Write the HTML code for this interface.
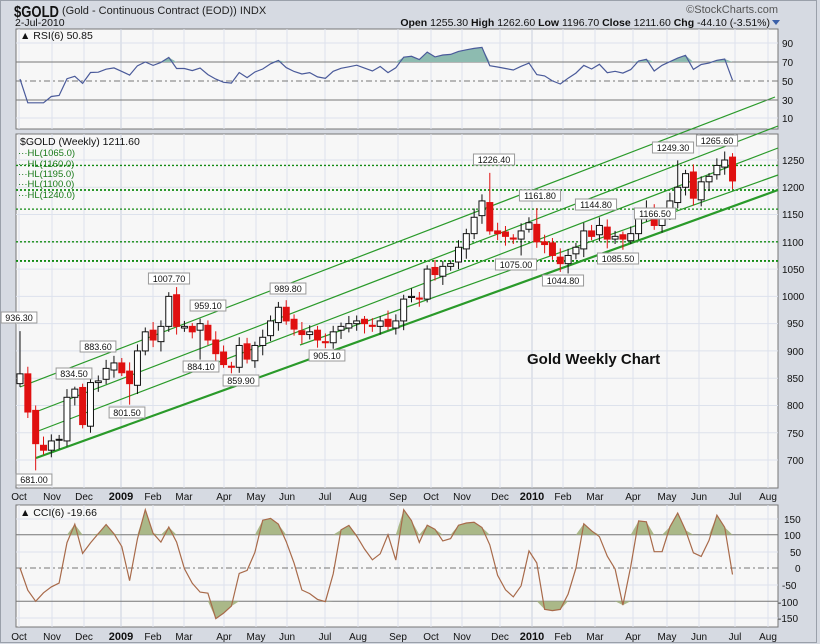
<!DOCTYPE html>
<html><head><meta charset="utf-8"><style>
body{margin:0;width:820px;height:644px;overflow:hidden;background:#d6dae2;font-family:"Liberation Sans",sans-serif}
svg{display:block}
</style></head><body>
<svg id="s" width="820" height="644" xmlns="http://www.w3.org/2000/svg" font-family="Liberation Sans, sans-serif">
<rect x="0.5" y="0.5" width="816" height="642" fill="#d6dae2" stroke="#9aa0aa"/>
<text x="14" y="17" font-size="16" font-weight="bold" fill="#111" textLength="45" lengthAdjust="spacingAndGlyphs">$GOLD</text>
<text x="62" y="14" font-size="11" fill="#222">(Gold - Continuous Contract (EOD))  INDX</text>
<text x="15" y="26" font-size="10.5" fill="#111">2-Jul-2010</text>
<text x="778" y="13" font-size="11" fill="#555" text-anchor="end">©StockCharts.com</text>
<text x="770" y="26" font-size="10.5" fill="#111" text-anchor="end"><tspan font-weight="bold">Open</tspan> 1255.30 <tspan font-weight="bold">High</tspan> 1262.60 <tspan font-weight="bold">Low</tspan> 1196.70 <tspan font-weight="bold">Close</tspan> 1211.60 <tspan font-weight="bold">Chg</tspan> -44.10 (-3.51%)</text>
<path d="M772,20 l8,0 l-4,5z" fill="#3a5fa8"/>
<rect x="16" y="29" width="762" height="100" fill="#f7f7f7" stroke="#777"/>
<rect x="16" y="134" width="762" height="354" fill="#f7f7f7" stroke="#777"/>
<rect x="16" y="505" width="762" height="122" fill="#f7f7f7" stroke="#777"/>
<g id="grid" stroke="#dde2ec" stroke-width="1"></g>
<g id="ds"></g>
<text x="20" y="39" font-size="10.5" fill="#111">▲ RSI(6) 50.85</text>
<g font-size="10" fill="#111">
<text x="782" y="47">90</text><text x="782" y="66">70</text><text x="782" y="85">50</text><text x="782" y="104">30</text><text x="782" y="122">10</text>
<text x="782" y="164">1250</text><text x="782" y="191">1200</text><text x="782" y="218">1150</text><text x="782" y="246">1100</text><text x="782" y="273">1050</text><text x="782" y="300">1000</text><text x="787" y="327">950</text><text x="787" y="355">900</text><text x="787" y="382">850</text><text x="787" y="409">800</text><text x="787" y="437">750</text><text x="787" y="464">700</text>
<text x="784" y="523">150</text><text x="784" y="539">100</text><text x="790" y="556">50</text><text x="795" y="572">0</text><text x="782" y="589">-50</text><text x="778" y="606">-100</text><text x="778" y="622">-150</text>
</g>
<text x="20" y="145" font-size="10.5" fill="#111">$GOLD (Weekly) 1211.60</text>
<g font-size="9.5" fill="#1a7a1a">
<text x="18" y="156">···HL(1065.0)</text><text x="18" y="167">···HL(1160.0)</text><text x="18" y="177">···HL(1195.0)</text><text x="18" y="187">···HL(1100.0)</text><text x="18" y="198">···HL(1240.0)</text>
</g>
<text x="20" y="516" font-size="10.5" fill="#111">▲ CCI(6) -19.66</text>
<text x="527" y="364" font-size="15" font-weight="bold" fill="#111">Gold Weekly Chart</text>
<g id="labs" font-size="9" fill="#111"></g>
<g id="mon" font-size="10" fill="#111"></g>
</svg>
<script>
var NS="http://www.w3.org/2000/svg";
function el(p,t,a,txt){var e=document.createElementNS(NS,t);for(var k in a)e.setAttribute(k,a[k]);if(txt!=null)e.textContent=txt;document.getElementById(p).appendChild(e);return e;}
function py(p){return 160+(1250-p)*0.5455;}
function X(i){return 20+i*7.83;}
var months=[["Oct",19],["Nov",52],["Dec",84],["2009",121],["Feb",153],["Mar",184],["Apr",224],["May",256],["Jun",287],["Jul",325],["Aug",358],["Sep",398],["Oct",431],["Nov",462],["Dec",500],["2010",532],["Feb",563],["Mar",595],["Apr",633],["May",667],["Jun",699],["Jul",735],["Aug",768]];
months.forEach(function(m){
 var x=m[1];
 [[29,129],[134,488],[505,627]].forEach(function(r){el("grid","line",{x1:x,x2:x,y1:r[0],y2:r[1],stroke:(m[0].length==4?"#c8cfdc":"#dde2ec")});});
 [496,636].forEach(function(y){el("mon","text",{x:x,y:y+4,"text-anchor":"middle","font-weight":m[0].length==4?"bold":"normal","font-size":m[0].length==4?"11":"10"},m[0]);});
});
for(var p=700;p<=1250;p+=50)el("grid","line",{x1:16,x2:778,y1:py(p),y2:py(p)});
[43,118].forEach(function(y){el("grid","line",{x1:16,x2:778,y1:y,y2:y});});
[519,552,585,618].forEach(function(y){el("grid","line",{x1:16,x2:778,y1:y,y2:y});});
var C=[858,788,730,718,735,738,815,830,765,842,845,868,878,860,840,900,935,920,945,1000,945,945,935,950,920,895,875,870,910,885,910,925,955,980,955,940,930,935,920,915,935,945,950,955,950,945,955,945,955,995,1000,995,1050,1040,1055,1060,1090,1115,1145,1175,1120,1115,1110,1105,1120,1135,1100,1095,1075,1060,1075,1090,1120,1110,1130,1105,1110,1105,1115,1150,1160,1130,1155,1175,1200,1225,1180,1210,1220,1240,1250,1211.6];
var O=[840],H=[],L=[];
for(var i=1;i<C.length;i++)O.push(C[i-1]+((i%3)-1)*3);
for(i=0;i<C.length;i++){H.push(Math.max(O[i],C[i])+6+(i*7%11));L.push(Math.min(O[i],C[i])-6-(i*5%13));}
H[0]=936.3;L[2]=681;H[7]=834.5;H[11]=883.6;L[14]=801.5;H[19]=1007.7;H[23]=959.1;L[23]=884.1;L[28]=859.9;H[33]=989.8;L[39]=905.1;H[60]=1226.4;L[64]=1075;H[66]=1161.8;L[69]=1044.8;H[74]=1144.8;L[77]=1085.5;H[84]=1249.3;L[86]=1166.5;H[90]=1265.6;O[91]=1255.3;H[91]=1262.6;L[91]=1196.7;
[1240,1195,1160,1100,1065].forEach(function(p){el("ds","line",{x1:16,x2:778,y1:py(p),y2:py(p),stroke:"#128a12","stroke-width":(p==1195||p==1065)?1.8:1.3,"stroke-dasharray":"2,2"});});
[[20,387,775,97,1.2],[33,413,778,126,1.2],[33,433,778,148,1.2],[300,345,778,175,1.2],[36,458,778,190,2.2]].forEach(function(l){el("ds","line",{x1:l[0],y1:l[1],x2:l[2],y2:l[3],stroke:"#2a9a2a","stroke-width":l[4]});});
for(i=0;i<C.length;i++){var x=X(i),up=C[i]>=O[i];var col=up?"#111":"#e01010";
 el("ds","line",{x1:x,x2:x,y1:py(H[i]),y2:py(L[i]),stroke:col});
 var t=py(Math.max(O[i],C[i])),b=py(Math.min(O[i],C[i]));if(b-t<1)b=t+1;
 el("ds","rect",{x:x-3,y:t,width:6,height:b-t,fill:up?"#fff":"#e01010",stroke:col});}
[["936.30",19,320,1],["1007.70",169,281,1],["883.60",98,349,1],["834.50",74,376,1],["959.10",208,308,1],["884.10",201,369,0],["801.50",127,415,0],["859.90",241,383,0],["989.80",288,291,1],["905.10",327,358,0],["681.00",34,482,0],["1226.40",494,162,1],["1161.80",540,198,1],["1075.00",516,267,0],["1044.80",563,283,0],["1144.80",596,207,1],["1085.50",618,261,0],["1166.50",655,216,0],["1249.30",673,150,1],["1265.60",717,143,1]].forEach(function(l){
 var w=l[0].length*5.3+4;el("labs","rect",{x:l[1]-w/2,y:l[2]-8,width:w,height:11,fill:"#fff",stroke:"#999"});
 el("labs","text",{x:l[1],y:l[2]+1,"text-anchor":"middle"},l[0]);});
var ry=function(v){return 81-(v-50)*0.95;};
el("ds","line",{x1:16,x2:778,y1:ry(70),y2:ry(70),stroke:"#777"});el("ds","line",{x1:16,x2:778,y1:ry(30),y2:ry(30),stroke:"#777"});
el("ds","line",{x1:16,x2:778,y1:ry(50),y2:ry(50),stroke:"#777","stroke-dasharray":"6,3,2,3"});
var g=0,ls=0,n=6,rsi=[];
for(i=1;i<C.length;i++){var d=C[i]-C[i-1];var gu=Math.max(d,0),lo=Math.max(-d,0);
 if(i<=n){g+=gu/n;ls+=lo/n;}else{g=(g*(n-1)+gu)/n;ls=(ls*(n-1)+lo)/n;}
 var r=ls==0?100:100-100/(1+g/ls);rsi.push([X(i),58+(r-50)*0.62]);}
rsi.unshift([X(0),52]);
rsi[91][1]=50.85;
var pts=rsi.map(function(r){return r[0].toFixed(1)+","+ry(Math.min(r[1],94)).toFixed(1);}).join(" ");
el("ds","polygon",{points:X(0)+","+ry(70)+" "+rsi.map(function(r){return r[0].toFixed(1)+","+ry(Math.max(70,Math.min(r[1],94))).toFixed(1);}).join(" ")+" "+X(91)+","+ry(70),fill:"#8dbbb0"});
el("ds","polyline",{points:pts,fill:"none",stroke:"#4a5a9a","stroke-width":1.2});
var cy=function(v){return 568-v*0.333;};
el("ds","line",{x1:16,x2:778,y1:cy(100),y2:cy(100),stroke:"#777"});el("ds","line",{x1:16,x2:778,y1:cy(-100),y2:cy(-100),stroke:"#777"});
el("ds","line",{x1:16,x2:778,y1:cy(0),y2:cy(0),stroke:"#777","stroke-dasharray":"6,3,2,3"});
var tp=C.map(function(c,i){return (H[i]+L[i]+c)/3;}),cci=[];
for(i=0;i<C.length;i++){var s=Math.max(0,i-5),a=tp.slice(s,i+1),m=a.reduce(function(x,y){return x+y;},0)/a.length,md=a.reduce(function(x,y){return x+Math.abs(y-m);},0)/a.length;
 var v=md==0?0:(tp[i]-m)/(0.015*md);v=Math.max(-160,Math.min(175,v));cci.push([X(i),v]);}
cci[91][1]=-19.66;
el("ds","polygon",{points:X(0)+","+cy(100)+" "+cci.map(function(r){return r[0].toFixed(1)+","+cy(Math.max(100,r[1])).toFixed(1);}).join(" ")+" "+X(91)+","+cy(100),fill:"#aab888"});
el("ds","polygon",{points:X(0)+","+cy(-100)+" "+cci.map(function(r){return r[0].toFixed(1)+","+cy(Math.min(-100,r[1])).toFixed(1);}).join(" ")+" "+X(91)+","+cy(-100),fill:"#aab888"});
el("ds","polyline",{points:cci.map(function(r){return r[0].toFixed(1)+","+cy(r[1]).toFixed(1);}).join(" "),fill:"none",stroke:"#a86a4a","stroke-width":1.2});
</script>
</body></html>
